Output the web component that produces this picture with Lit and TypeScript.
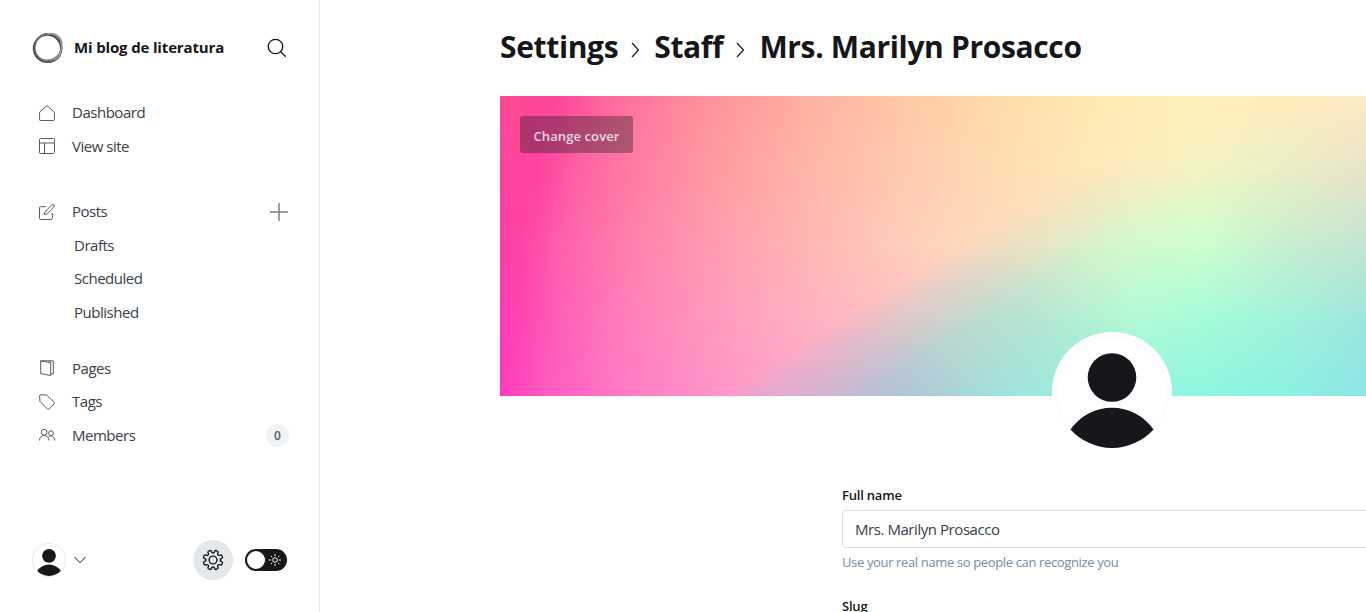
import { LitElement, html, svg, css } from "lit";
import { customElement, state } from "lit/decorators.js";

const icons = {
  home: svg`<path d="M.6 7.200 8 .7l7.400 6.500v7.400a.9.9 0 0 1-.9.9h-13a.9.9 0 0 1-.9-.9z"/>`,
  site: svg`<rect x=".5" y=".5" width="15" height="15" rx="1"/><path d="M.5 5h15M5.500 5v10.500"/>`,
  posts: svg`<path d="M7 2.700H1.500a1 1 0 0 0-1 1v10.800a1 1 0 0 0 1 1h10.800a1 1 0 0 0 1-1V9M5.300 10.700l.7-3L12.900.9a1.350 1.350 0 0 1 2 2L8.200 9.800z"/>`,
  pages: svg`<path d="M1.700.8h8.200l1.800 1.500v13.200L1.700 13.600zM1.700.8l10 2M9.900.8h4.400v13h-2.600"/>`,
  tags: svg`<path d="M.6 1.900A1.300 1.300 0 0 1 1.900.7l5.600.3 7.600 7.200a1.200 1.200 0 0 1 0 1.700l-5 5a1.200 1.200 0 0 1-1.700 0L1 7.500z"/>`,
  members: svg`<circle cx="5.200" cy="5.200" r="2.900"/><circle cx="12" cy="6.200" r="2.400"/><path d="M.5 13.500c.1-3.300 2-5 4.700-5s4.500 1.700 4.700 5M9.700 10c2.600-2.200 5.700-.9 5.800 3.500"/>`,
};

const person = svg`<circle cx="56" cy="41.500" r="24.300"/><path d="M14.500 93.500a50.500 50.500 0 0 1 83 0A56 56 0 0 1 14.500 93.500z"/>`;

const gear = (() => {
  const pts: number[][] = [];
  for (let i = 0; i < 8; i++) {
    const a = (i * Math.PI) / 4 - Math.PI / 2 + Math.PI / 8;
    [[-0.3, 7], [-0.2, 8.6], [-0.17, 10.1], [0.17, 10.1], [0.2, 8.6], [0.3, 7]].forEach(([d, r]) =>
      pts.push([11 + r * Math.cos(a + d), 11 + r * Math.sin(a + d)])
    );
  }
  const mid = (p: number[], q: number[]) => `${((p[0] + q[0]) / 2).toFixed(2)} ${((p[1] + q[1]) / 2).toFixed(2)}`;
  let d = "M" + mid(pts[pts.length - 1], pts[0]);
  pts.forEach((p, i) => (d += `Q${p[0].toFixed(2)} ${p[1].toFixed(2)} ${mid(p, pts[(i + 1) % pts.length])}`));
  return d + "z";
})();

@customElement("app-root")
export class AppRoot extends LitElement {
  @state() private fullName = "Mrs. Marilyn Prosacco";

  static styles = css`
    :host { display: flex; width: 100%; height: 612px; overflow: hidden; background: #fff; color: #15171a;
      font-family: "Open Sans", "Noto Sans", sans-serif; font-size: 15px; }
    * { box-sizing: border-box; }
    svg { display: block; fill: none; stroke: currentColor; flex: none; }
    aside { width: 320px; flex: none; border-right: 1px solid #e4e7ea; padding: 31px 31px 32px 32px; display: flex; flex-direction: column; }
    .brand { display: flex; align-items: center; height: 34px; }
    .brand strong { font-size: 15px; font-weight: 700; margin: -2px 0 0 10px; letter-spacing: -.15px; flex: 1; white-space: nowrap; }
    .brand .search { margin-right: 1px; }
    nav { color: #394047; display: flex; flex-direction: column; margin-top: 30.500px; }
    .group { display: flex; flex-direction: column; margin-bottom: 32px; }
    .group.posts { margin-bottom: 22.500px; }
    .item { display: flex; align-items: center; height: 33.500px; padding-left: 7px; font-size: 15px; letter-spacing: -.48px; }
    .item svg { margin-right: 17px; margin-top: 1px; color: #545c65; }
    .item span { flex: 1; }
    .sub { padding-left: 42px; }
    .item .plus { margin-right: 0; color: #777d84; }
    .badge { background: #f1f3f4; border-radius: 50%; width: 23px; height: 23px; font-size: 12px; font-weight: 600; display: grid; place-items: center; color: #545c65; letter-spacing: 0; margin: 2px -1px 0 0; }
    footer { margin-top: auto; display: flex; align-items: center; height: 40px; }
    .me { width: 34px; height: 34px; border: 1px solid #e7eaec; border-radius: 50%; }
    .me svg, .avatar svg { fill: #15171a; stroke: none; width: 100%; height: 100%; }
    .chev { margin-left: 8px; }
    .settings { margin-left: auto; width: 40px; height: 40px; border-radius: 50%; background: #e4e8eb; display: grid; place-items: center; }
    .toggle { margin: 0 1px 0 12px; width: 42px; height: 22px; border-radius: 11px; background: #15171a; color: #fff; display: flex; align-items: center; justify-content: space-between; padding: 0 6px 0 2px; }
    .knob { width: 18px; height: 18px; border-radius: 50%; background: #fff; }
    main { flex: 1; min-width: 0; padding: 24px 0 0 180px; overflow: hidden; }
    h1 { margin: 0; height: 48px; padding-bottom: 3px; display: flex; align-items: center; font-size: 30px; font-weight: 700; white-space: nowrap; letter-spacing: -.35px; }
    h1 svg { margin: 6px 13px 0 12px; }
    .cover { position: relative; width: 1224px; height: 300px; margin-top: 24px; }
    .band, .cool { position: absolute; top: 0; left: 0; width: 866px; height: 300px; }
    .cool { -webkit-mask: linear-gradient(147.9deg, transparent 368px, rgba(0,0,0,.5) 397px, #000 445px); }
    .r1 { -webkit-mask: linear-gradient(transparent 0, #000 75px); }
    .r2 { -webkit-mask: linear-gradient(transparent 75px, #000 150px); }
    .r3 { -webkit-mask: linear-gradient(transparent 150px, #000 225px); }
    .r4 { -webkit-mask: linear-gradient(transparent 225px, #000 300px); }
    .w0 { background: linear-gradient(90deg, #ff4a92 0, #ff4599 55px, #ff6c9f 115px, #ff8c9b 190px, #ffaea0 300px, #ffc8a6 400px, #ffdcaa 500px, #ffeab0 600px, #fff1bc 700px, #ffecbc 800px, #fdebc4 866px); }
    .w1 { background: linear-gradient(90deg, #ff459f 0, #ff429f 38px, #ff60a4 75px, #ff7ba2 130px, #ff9ba2 215px, #ffb5a8 305px, #ffc9ae 400px, #ffdcb2 500px, #ffe9b9 590px, #fff0c0 700px, #f4e8c4 866px); }
    .w2 { background: linear-gradient(90deg, #ff3fa6 0, #ff43a7 22px, #ff60ac 60px, #ff80ae 130px, #ff9fb0 220px, #ffb9b5 320px, #ffcfbb 410px, #ffdabd 480px, #ffe6c0 600px); }
    .w3 { background: linear-gradient(90deg, #ff3cb4 0, #ff42b4 16px, #ff60b8 60px, #ff80ba 130px, #ff9cbf 220px, #ffb3c1 320px, #ffc4c6 420px); }
    .w4 { background: linear-gradient(90deg, #ff3cbc 0, #ff5ac0 45px, #ff7cc4 130px, #ff94c8 220px, #ffa4cb 280px, #ffb4d0 400px); }
    .c0 { background: linear-gradient(90deg, #ffeab0 600px, #fff1bc 700px, #ffecbc 800px, #fdebc4 866px); }
    .c1 { background: linear-gradient(90deg, #ecdcbc 540px, #f3efbf 640px, #f2f4c2 700px, #ebedc6 790px, #e6e4c8 866px); }
    .c2 { background: linear-gradient(90deg, #d4d4c8 430px, #dbe6c8 530px, #d4f8cc 620px, #ccffcf 700px, #c6eed0 790px, #c2e6d0 866px); }
    .c3 { background: linear-gradient(90deg, #ccbccc 330px, #c6cccc 400px, #c0d8ce 450px, #b5e2d2 520px, #b0fbd5 640px, #a4fcd8 700px, #a0f0dc 800px, #9ce6de 866px); }
    .c4 { background: linear-gradient(90deg, #d4a8cf 240px, #c8b4d2 320px, #b0c6d6 410px, #a0e2dc 500px, #96f0e0 600px, #90f5e0 700px, #8ceee2 800px, #8ce6e4 866px); }
    .change { position: absolute; left: 20px; top: 20px; width: 113px; height: 37px; border: 0; border-radius: 3px; padding: 3px 0 0; background: rgba(21,23,26,.35); color: rgba(255,255,255,.8); font: 600 13px "Open Sans", sans-serif; letter-spacing: .1px; white-space: nowrap; }
    .avatar { position: absolute; left: 552px; top: 236px; width: 120px; height: 120px; border-radius: 50%; padding: 4px; background: #fff; }
    form { width: 540px; margin: 92px 0 0 342px; display: flex; flex-direction: column; }
    label { font-size: 13px; font-weight: 600; height: 22px; line-height: 14px; letter-spacing: -.2px; }
    input { height: 38px; margin-bottom: 4px; border: 1px solid #dddfe2; border-radius: 3px; padding: 0 12px; font: 15px "Open Sans", sans-serif; letter-spacing: -.44px; color: #394047; outline: 0; }
    p { margin: 0 0 27px; font-size: 13px; line-height: 20px; color: #7c8b9a; letter-spacing: -.36px; }
  `;

  private item(icon: unknown, label: string, extra: unknown = "") {
    return html`<div class="item"><svg width="16" height="16" viewBox="0 0 16 16">${icon}</svg><span>${label}</span>${extra}</div>`;
  }

  private arrow() {
    return html`<svg width="11" height="16" viewBox="0 0 11 16" stroke-width="1.200"><path d="M2 1l6.500 7L2 15"/></svg>`;
  }

  render() {
    return html`
      <aside>
        <div class="brand">
          <svg width="32" height="32" viewBox="0 0 32 32">
            <circle cx="15.300" cy="16.500" r="13.600" stroke="#444" stroke-width="1.800"/>
            <ellipse cx="16.800" cy="15.500" rx="13.900" ry="12.800" stroke="#777" stroke-width="1.500" transform="rotate(-40 16 16)"/>
            <ellipse cx="16" cy="15.700" rx="14.500" ry="13.500" stroke="#666" stroke-width="1" transform="rotate(65 16 16)"/>
            <path d="M15 2.500c7-3 14 2 15 9M29 10c2 8-1 15-8 18" stroke="#999" stroke-width="1.500"/>
          </svg>
          <strong>Mi blog de literatura</strong>
          <svg class="search" width="20" height="20" viewBox="0 0 20 20" stroke-width="1.300"><circle cx="8.500" cy="8.500" r="7.200"/><path d="M13.700 13.700l5 5"/></svg>
        </div>
        <nav>
          <div class="group">${this.item(icons.home, "Dashboard")}${this.item(icons.site, "View site")}</div>
          <div class="group posts">
            ${this.item(icons.posts, "Posts", html`<svg class="plus" width="18" height="18" viewBox="0 0 18 18" stroke-width="1.500"><path d="M9 0v18M0 9h18"/></svg>`)}
            ${["Drafts", "Scheduled", "Published"].map((t) => html`<div class="item sub">${t}</div>`)}
          </div>
          <div class="group">
            ${this.item(icons.pages, "Pages")}${this.item(icons.tags, "Tags")}
            ${this.item(icons.members, "Members", html`<b class="badge">0</b>`)}
          </div>
        </nav>
        <footer>
          <div class="me"><svg viewBox="0 0 112 112">${person}</svg></div>
          <svg class="chev" width="12" height="8" viewBox="0 0 12 8" stroke-width="1"><path d="M.5 1 6 6.800 11.500 1"/></svg>
          <div class="settings"><svg width="22" height="22" viewBox="0 0 22 22" stroke-width="1.400"><path d=${gear}/><circle cx="11" cy="11" r="3.900"/></svg></div>
          <div class="toggle"><i class="knob"></i>
            <svg width="12" height="12" viewBox="0 0 12 12" stroke-width="1"><circle cx="6" cy="6" r="2.300"/><path d="M6 0v2M6 10v2M0 6h2M10 6h2M1.800 1.800l1.300 1.300M8.900 8.900l1.300 1.300M1.800 10.200l1.300-1.300M8.900 3.100l1.300-1.300"/></svg>
          </div>
        </footer>
      </aside>
      <main>
        <h1><span>Settings</span>${this.arrow()}<span>Staff</span>${this.arrow()}<span>${this.fullName}</span></h1>
        <div class="cover">
          ${[0, 1, 2, 3, 4].map((n) => html`<div class="band w${n} r${n}"></div>`)}
          <div class="cool">${[0, 1, 2, 3, 4].map((n) => html`<div class="band c${n} r${n}"></div>`)}</div>
          <button class="change">Change cover</button>
          <div class="avatar"><svg viewBox="0 0 112 112"><circle cx="56" cy="56" r="55.500" fill="#fff" stroke="#f8f9fa"/>${person}</svg></div>
        </div>
        <form>
          <label>Full name</label>
          <input .value=${this.fullName} />
          <p>Use your real name so people can recognize you</p>
          <label>Slug</label>
          <input />
        </form>
      </main>`;
  }
}
